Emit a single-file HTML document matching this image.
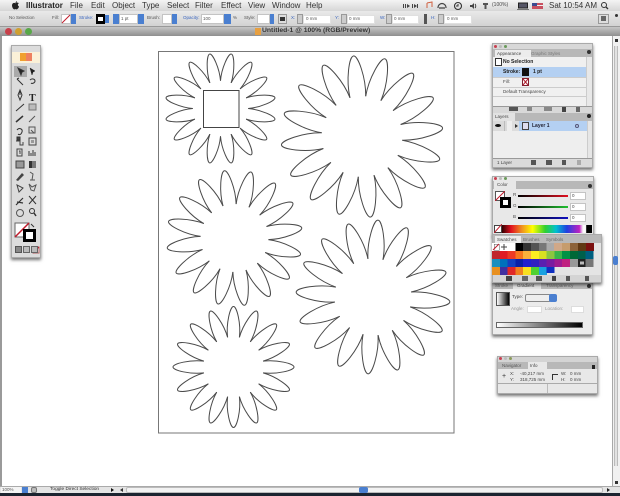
<!DOCTYPE html>
<html><head><meta charset="utf-8"><style>
html,body{margin:0;padding:0}
body{width:620px;height:496px;overflow:hidden;background:#fff;position:relative;font-family:"Liberation Sans",sans-serif;color:#222;filter:blur(.3px)}
div{position:absolute;box-sizing:border-box}
.t{position:absolute;white-space:nowrap;line-height:1}
.m{font-size:8px;top:1.5px;color:#333}
.s{font-size:4.5px;color:#555}
.i{background:#fff;border:1px solid #c4c4c4}
.blue{background:#4a7fd0}
.p{background:#ececec;box-shadow:0 2px 3px rgba(0,0,0,.55);border:1px solid #aaa}
.l{font-size:4.5px;color:#444}
.dots i{position:absolute;width:3px;height:3px;border-radius:50%}
</style></head><body>
<!-- menu bar -->
<div style="left:0;top:0;width:620px;height:11px;background:linear-gradient(#f4f4f4,#d6d6d6)"></div>
<svg style="position:absolute;left:11px;top:1px" width="9" height="9" viewBox="0 0 9 9"><path d="M4.5 2.2C3 1.3 1 2 1 4.4 1 6.4 2.4 8.6 3.4 8.4c.5 0 .7-.3 1.1-.3s.6.3 1.1.3c1 .2 2.4-2 2.4-3-1.6-.8-1.4-2.7-.1-3.2-.9-.9-2.3-.7-3.4 0zM4.500 2C4.500 1 5.200.3 6 .2c0 1-.6 1.700-1.500 1.800z" fill="#222"/></svg>
<span class="t m" style="left:26px;font-weight:bold;color:#222">Illustrator</span>
<span class="t m" style="left:70px">File</span>
<span class="t m" style="left:91px">Edit</span>
<span class="t m" style="left:112px">Object</span>
<span class="t m" style="left:142px">Type</span>
<span class="t m" style="left:167px">Select</span>
<span class="t m" style="left:195px">Filter</span>
<span class="t m" style="left:221px">Effect</span>
<span class="t m" style="left:248px">View</span>
<span class="t m" style="left:272px">Window</span>
<span class="t m" style="left:306px">Help</span>
<svg style="position:absolute;left:400px;top:1px" width="215" height="10" viewBox="0 0 215 10">
<path d="M3 3h1v4H3zM5 3h1v4H5zM7 3l3 2-3 2zM12 3h1v4h-1zM14 3l3 2-3 2zM17 3h1v4h-1z" fill="#444"/>
<path d="M27 2l5-1v5M27 2v5" stroke="#d06040" fill="none" stroke-width="1"/>
<path d="M38 7c0-6 8-6 8 0M39 7h6" stroke="#444" fill="none" stroke-width="1.200"/>
<circle cx="58" cy="5" r="3.500" stroke="#333" fill="none" stroke-width="1.100"/><path d="M58 3v2h-2" stroke="#333" fill="none"/>
<path d="M70 4h2l2-2v6l-2-2h-2z" fill="#444"/><path d="M75 3c1 1 1 3 0 4" stroke="#444" fill="none"/>
<path d="M83 2h5v2h-1.500v4h-2V4H83z" fill="#555"/>
<rect x="118" y="1.500" width="10" height="6" fill="#222"/><rect x="119" y="2.500" width="8" height="4" fill="#556"/><rect x="117" y="8" width="12" height="1" fill="#777"/>
<rect x="132" y="2" width="11" height="6" fill="#c85060"/><rect x="132" y="2" width="5" height="3" fill="#3a4a90"/><rect x="137" y="4" width="6" height="1" fill="#eee"/>
<circle cx="204" cy="4" r="2.500" stroke="#333" fill="none"/><path d="M206 6l2 2" stroke="#333" stroke-width="1.300"/>
</svg>
<span class="t" style="left:492px;top:3px;font-size:5px;color:#444">(100%)</span>
<span class="t m" style="left:549px;color:#333">Sat 10:54 AM</span>

<!-- control bar -->
<div style="left:0;top:11px;width:620px;height:16px;background:linear-gradient(#e9e9e9,#d2d2d2);border-bottom:1px solid #999"></div>
<span class="t s" style="left:9px;top:16px">No Selection</span>
<span class="t s" style="left:52px;top:16px">Fill:</span>
<div class="i" style="left:61px;top:14px;width:10px;height:10px"></div>
<svg style="position:absolute;left:61px;top:14px" width="10" height="10"><path d="M1 9L9 1" stroke="#c01c2c" stroke-width="1"/></svg>
<div class="blue" style="left:71px;top:14px;width:5px;height:10px"></div>
<span class="t s" style="left:79px;top:16px;color:#3a66c0">Stroke:</span>
<div style="left:96px;top:14px;width:9px;height:10px;background:#000"></div>
<div style="left:98px;top:17px;width:5px;height:4px;background:#fff"></div>
<div class="blue" style="left:105px;top:15px;width:4px;height:8px"></div>
<div class="blue" style="left:113px;top:14px;width:6px;height:10px"></div>
<div class="i" style="left:119px;top:14px;width:19px;height:10px"></div>
<span class="t s" style="left:121px;top:16.500px">1 pt</span>
<div class="blue" style="left:138px;top:14px;width:6px;height:10px"></div>
<span class="t s" style="left:147px;top:16px">Brush:</span>
<div class="i" style="left:162px;top:14px;width:10px;height:10px"></div>
<div class="blue" style="left:172px;top:14px;width:5px;height:10px"></div>
<span class="t s" style="left:183px;top:16px;color:#3a66c0">Opacity:</span>
<div class="i" style="left:201px;top:14px;width:23px;height:10px"></div>
<span class="t s" style="left:203px;top:16.500px">100</span>
<div class="blue" style="left:224px;top:14px;width:7px;height:10px"></div>
<span class="t s" style="left:233px;top:16px">%</span>
<span class="t s" style="left:244px;top:16px">Style:</span>
<div class="i" style="left:257px;top:14px;width:13px;height:10px"></div>
<div class="blue" style="left:270px;top:14px;width:4px;height:10px"></div>
<div style="left:278px;top:14px;width:9px;height:10px;background:#ddd;border:1px solid #999"></div>
<div style="left:280px;top:17px;width:5px;height:4px;background:#333"></div>
<span class="t s" style="left:291px;top:16px;color:#3a66c0">X:</span>
<div style="left:297px;top:14px;width:6px;height:10px;background:#ccc;border:1px solid #999"></div>
<div class="i" style="left:303px;top:15px;width:28px;height:9px;border-color:#e0e0e0"></div>
<span class="t s" style="left:306px;top:16.500px">0 mm</span>
<span class="t s" style="left:335px;top:16px;color:#3a66c0">Y:</span>
<div style="left:341px;top:14px;width:6px;height:10px;background:#ccc;border:1px solid #999"></div>
<div class="i" style="left:347px;top:15px;width:28px;height:9px;border-color:#e0e0e0"></div>
<span class="t s" style="left:349px;top:16.500px">0 mm</span>
<span class="t s" style="left:380px;top:16px;color:#3a66c0">W:</span>
<div style="left:386px;top:14px;width:6px;height:10px;background:#ccc;border:1px solid #999"></div>
<div class="i" style="left:392px;top:15px;width:27px;height:9px;border-color:#e0e0e0"></div>
<span class="t s" style="left:394px;top:16.500px">0 mm</span>
<div style="left:424px;top:14px;width:3px;height:10px;background:#555"></div>
<span class="t s" style="left:431px;top:16px;color:#3a66c0">H:</span>
<div style="left:438px;top:14px;width:6px;height:10px;background:#ccc;border:1px solid #999"></div>
<div class="i" style="left:444px;top:15px;width:28px;height:9px;border-color:#e0e0e0"></div>
<span class="t s" style="left:447px;top:16.500px">0 mm</span>
<div style="left:598px;top:14px;width:11px;height:10px;background:#ddd;border:1px solid #999"></div>
<div style="left:601px;top:16px;width:5px;height:5px;background:#666"></div>
<div style="left:615px;top:14px;width:3px;height:3px;background:#333;border-radius:50%"></div>

<!-- title bar -->
<div style="left:0;top:27px;width:620px;height:9px;background:linear-gradient(#c6c6c6,#8f8f8f)"></div>
<div style="left:5px;top:28px;width:7px;height:7px;border-radius:50%;background:#c8404a"></div>
<div style="left:15px;top:28px;width:7px;height:7px;border-radius:50%;background:#d0a030"></div>
<div style="left:25px;top:28px;width:7px;height:7px;border-radius:50%;background:#58a848"></div>
<div style="left:255px;top:28px;width:6px;height:7px;background:#e8a040"></div>
<span class="t" style="left:262px;top:28px;font-size:6.800px;font-weight:bold;color:#333">Untitled-1 @ 100% (RGB/Preview)</span>

<!-- window edges -->
<div style="left:0;top:36px;width:2px;height:451px;background:#9a9a9a"></div>
<!-- vertical scrollbar -->
<div style="left:612px;top:36px;width:8px;height:451px;background:#f1f1f1;border-left:1px solid #a8a8a8"></div>
<div style="left:614px;top:46px;width:4px;height:420px;background:#e2e2e2;border-left:1px solid #bbb;border-right:1px solid #bbb"></div>
<div class="blue" style="left:613px;top:256px;width:5px;height:9px;border-radius:2px"></div>
<div style="left:615px;top:39px;width:3px;height:3px;background:#333"></div>
<div style="left:615px;top:481px;width:3px;height:3px;background:#333"></div>

<!-- artwork -->
<svg style="position:absolute;left:0;top:0" width="620" height="496" viewBox="0 0 620 496">
<defs>
<path id="pt" d="M-9.750-49C-12.500-72-5.500-100 0-100 5.500-100 12.500-72 9.750-49" fill="none" stroke="#4a4a4a" stroke-width="1" vector-effect="non-scaling-stroke"/>
<g id="ring">
<use href="#pt"/><use href="#pt" transform="rotate(22.500)"/><use href="#pt" transform="rotate(45)"/><use href="#pt" transform="rotate(67.500)"/>
<use href="#pt" transform="rotate(90)"/><use href="#pt" transform="rotate(112.500)"/><use href="#pt" transform="rotate(135)"/><use href="#pt" transform="rotate(157.500)"/>
<use href="#pt" transform="rotate(180)"/><use href="#pt" transform="rotate(202.500)"/><use href="#pt" transform="rotate(225)"/><use href="#pt" transform="rotate(247.500)"/>
<use href="#pt" transform="rotate(270)"/><use href="#pt" transform="rotate(292.500)"/><use href="#pt" transform="rotate(315)"/><use href="#pt" transform="rotate(337.500)"/>
</g></defs>
<rect x="158.500" y="51.500" width="295.500" height="381.500" fill="#fff" stroke="#777" stroke-width="1"/>
<use href="#ring" transform="translate(220.500 108.500) rotate(11.250) scale(.555)"/>
<rect x="203.500" y="90.500" width="35.500" height="37" fill="#fff" stroke="#444" stroke-width="1"/>
<use href="#ring" transform="translate(362 136.500) rotate(-6) scale(.81)"/>
<use href="#ring" transform="translate(234.500 238) rotate(-8.500) scale(.68)"/>
<use href="#ring" transform="translate(373 297) rotate(3.700) scale(.77)"/>
<use href="#ring" transform="translate(233.500 367) scale(.605)"/>
</svg>

<!-- toolbox -->
<div class="p" style="left:11px;top:45px;width:30px;height:213px;background:#dcdcdc"></div>
<div style="left:12px;top:52px;width:28px;height:11px;background:#fbf1d8"></div>
<div style="left:20px;top:53px;width:6px;height:8px;background:#f0a030"></div>
<div style="left:26px;top:53px;width:6px;height:8px;background:#ee8060"></div>
<div style="left:14px;top:66px;width:13px;height:11px;background:#aaa"></div>
<svg style="position:absolute;left:12px;top:64px" width="28" height="194" viewBox="0 0 28 194" fill="none" stroke="#333" stroke-width="1">
<path d="M6 4l3 7 1-3 2-1z" fill="#222"/><path d="M18 4l2 7 1-3 2-1z" fill="#222" stroke="#222" stroke-width=".5"/>
<path d="M5 15l6 6M5 15l2-1" /><path d="M18 16c2-2 5-1 5 1s-3 3-4 2"/>
<path d="M8 26l-2 5 2 5 2-5zM8 26v5"/><text x="17" y="37" font-family="Liberation Serif,serif" font-size="10" font-weight="bold" fill="#222" stroke="none">T</text>
<path d="M4 47l8-7"/><rect x="17" y="40" width="7" height="6" fill="#bbb" stroke="#777"/>
<path d="M4 58l7-6" stroke-width="1.500"/><path d="M17 58l6-6" stroke="#555"/>
<path d="M5 66c2-3 6-1 5 2s-3 3-4 2"/><path d="M17 63h6v6h-6zM19 66l3 3" stroke="#555"/>
<path d="M4 77h4v4h3v-3" stroke="#444"/><rect x="5" y="73" width="3" height="3" fill="#444"/><rect x="17" y="74" width="7" height="7" stroke="#444"/><rect x="19" y="76" width="3" height="3" fill="#999" stroke="none"/>
<path d="M5 85h5v7H5zM7 87h1v3" stroke="#444"/><path d="M17 92v-5M19 92v-3M21 92v-6M23 92v-4" stroke="#333"/>
<rect x="4" y="97" width="8" height="7" fill="#999" stroke="#444"/><rect x="17" y="97" width="7" height="7" fill="#333" stroke="none"/><rect x="20" y="97" width="4" height="7" fill="#777" stroke="none"/>
<path d="M4 116l6-7 2 2-6 6z" fill="#444" stroke="none"/><path d="M18 108l3 2-1 6M18 116h5" stroke="#555"/>
<path d="M5 121l6 3-4 4z" stroke="#444"/><path d="M17 120l3 3 4-2-2 6-3-1z" stroke="#555"/>
<path d="M4 141l7-7M5 138l6 1" stroke-width="1.200"/><path d="M17 132l7 8M24 132l-7 8" stroke-width="1"/>
<circle cx="8" cy="149" r="3.500" stroke="#555"/><circle cx="20" cy="147" r="2.500"/><path d="M22 149l2 3" stroke-width="1.500"/>
<rect x="3" y="159" width="14" height="14" fill="#fff" stroke="#666"/><path d="M3 173L17 159" stroke="#c01c2c" stroke-width="1.500"/>
<rect x="11" y="165" width="13" height="13" fill="#000" stroke="none"/><rect x="14" y="168" width="7" height="7" fill="#fff" stroke="none"/>
<path d="M19 160l3 3"/>
<rect x="4" y="183" width="6" height="6" fill="#111" stroke="none"/><rect x="13" y="183" width="4" height="6" fill="#777" stroke="none"/><rect x="21" y="183" width="6" height="6" fill="#fff" stroke="#b06060"/><path d="M21 189l6-6" stroke="#c01c2c"/>
</svg>
<div style="left:15px;top:246px;width:7px;height:7px;background:#888;border:1px solid #555"></div>
<div style="left:23px;top:246px;width:7px;height:7px;background:#bbb;border:1px solid #666"></div>
<div style="left:31px;top:246px;width:7px;height:7px;background:#bbb;border:1px solid #666"></div>

<!-- Appearance / Layers -->
<div class="p" style="left:492px;top:43px;width:101px;height:125px;background:#e6e6e6"></div>
<div style="left:493px;top:44px;width:99px;height:7px;background:#d8d8d8"></div>
<div class="dots" style="left:494px;top:44.500px;width:20px;height:4px"><i style="left:0;background:#c84050"></i><i style="left:5px;background:#bbb"></i><i style="left:10px;background:#6a9a5a"></i></div>
<div style="left:493px;top:49px;width:99px;height:8px;background:#b8b8b8"></div>
<div style="left:495px;top:50px;width:36px;height:7px;background:#ececec"></div>
<span class="t l" style="left:497px;top:51.500px">Appearance</span>
<span class="t l" style="left:531px;top:51.500px;color:#777">Graphic Styles</span>
<div style="left:587px;top:50px;width:4px;height:4px;background:#333;border-radius:50%"></div>
<div style="left:493px;top:57px;width:99px;height:49px;background:#f0f0f0"></div>
<div style="left:495px;top:58px;width:7px;height:8px;background:#fff;border:1px solid #333"></div>
<span class="t" style="left:503px;top:59.500px;font-size:5px;font-weight:bold;color:#222">No Selection</span>
<div style="left:493px;top:67px;width:93px;height:10px;background:#b4d0f2"></div>
<span class="t" style="left:503px;top:69.500px;font-size:5px;font-weight:bold;color:#222">Stroke:</span>
<div style="left:522px;top:68px;width:7px;height:8px;background:#111"></div>
<span class="t" style="left:533px;top:69.500px;font-size:5px;font-weight:bold;color:#222">1 pt</span>
<div style="left:493px;top:77px;width:93px;height:1px;background:#ccc"></div>
<span class="t l" style="left:503px;top:80px">Fill:</span>
<div style="left:522px;top:78px;width:7px;height:8px;background:#fff;border:1px solid #802030"></div>
<svg style="position:absolute;left:522px;top:78px" width="7" height="8"><path d="M1 7L6 1M1 1l5 6" stroke="#b02030"/></svg>
<div style="left:493px;top:87px;width:93px;height:1px;background:#ccc"></div>
<span class="t l" style="left:503px;top:89.500px">Default Transparency</span>
<div style="left:493px;top:96px;width:93px;height:1px;background:#ccc"></div>
<div style="left:586px;top:57px;width:6px;height:49px;background:#e8e8e8;border-left:1px solid #ccc"></div>
<div style="left:493px;top:106px;width:99px;height:7px;background:#d8d8d8;border-top:1px solid #999"></div>
<div style="left:509px;top:107px;width:9px;height:4px;background:#555"></div>
<div style="left:527px;top:107px;width:5px;height:4px;background:#888"></div>
<div style="left:544px;top:107px;width:8px;height:4px;background:#888"></div>
<div style="left:562px;top:107px;width:4px;height:5px;background:#444"></div>
<div style="left:576px;top:107px;width:4px;height:5px;background:#666"></div>
<!-- Layers -->
<div style="left:493px;top:113px;width:99px;height:8px;background:#b8b8b8"></div>
<div style="left:493px;top:113px;width:22px;height:8px;background:#e2e2e2"></div>
<span class="t l" style="left:495px;top:114.500px">Layers</span>
<div style="left:587px;top:114px;width:4px;height:4px;background:#222;border-radius:50%"></div>
<div style="left:493px;top:121px;width:99px;height:38px;background:#eeeeee"></div>
<div style="left:493px;top:121px;width:14px;height:10px;background:#dadada"></div>
<div style="left:495px;top:124px;width:6px;height:3px;background:#111;border-radius:50%"></div>
<div style="left:504px;top:121px;width:1px;height:10px;background:#bbb"></div>
<div style="left:512px;top:121px;width:7px;height:10px;background:#ddd"></div>
<div style="left:515px;top:124px;width:0;height:0;border-left:3px solid #333;border-top:2px solid transparent;border-bottom:2px solid transparent"></div>
<div style="left:519px;top:121px;width:68px;height:10px;background:#b4d0f2"></div>
<div style="left:522px;top:122px;width:7px;height:8px;background:#dde;border:1px solid #444"></div>
<span class="t" style="left:532px;top:123.500px;font-size:5px;font-weight:bold;color:#223">Layer 1</span>
<div style="left:575px;top:124px;width:4px;height:4px;border-radius:50%;border:1px solid #557"></div>
<div style="left:587px;top:121px;width:5px;height:38px;background:#e6e6e6;border-left:1px solid #ccc"></div>
<div style="left:493px;top:158px;width:99px;height:9px;background:#dadada;border-top:1px solid #999"></div>
<span class="t l" style="left:497px;top:161px">1 Layer</span>
<div style="left:531px;top:160px;width:5px;height:5px;background:#555"></div>
<div style="left:546px;top:160px;width:6px;height:5px;background:#555"></div>
<div style="left:562px;top:160px;width:4px;height:5px;background:#555"></div>
<div style="left:577px;top:160px;width:4px;height:5px;background:#aaa"></div>

<!-- Color -->
<div class="p" style="left:492px;top:176px;width:102px;height:60px;background:#e8e8e8"></div>
<div class="dots" style="left:494px;top:176.500px;width:20px;height:4px"><i style="left:0;background:#c84050"></i><i style="left:5px;background:#bbb"></i><i style="left:10px;background:#6a9a5a"></i></div>
<div style="left:493px;top:180.500px;width:100px;height:8px;background:#b8b8b8"></div>
<div style="left:494px;top:181px;width:22px;height:8px;background:#e8e8e8"></div>
<span class="t l" style="left:497px;top:182.500px">Color</span>
<div style="left:588px;top:184px;width:4px;height:4px;background:#333;border-radius:50%"></div>
<div style="left:495px;top:191px;width:10px;height:10px;background:#fff;border:1px solid #555"></div>
<svg style="position:absolute;left:495px;top:191px" width="10" height="10"><path d="M0 10L10 0" stroke="#c01c2c"/></svg>
<div style="left:500px;top:197px;width:11px;height:11px;background:#000"></div>
<div style="left:503px;top:200px;width:5px;height:5px;background:#fff"></div>
<span class="t l" style="left:513px;top:193px">R</span>
<span class="t l" style="left:513px;top:204px">G</span>
<span class="t l" style="left:513px;top:215px">B</span>
<div style="left:518px;top:194.500px;width:50px;height:2.500px;background:linear-gradient(90deg,#000,#e01020)"></div>
<div style="left:518px;top:205.500px;width:50px;height:2.500px;background:linear-gradient(90deg,#000,#20c030)"></div>
<div style="left:518px;top:216.500px;width:50px;height:2.500px;background:linear-gradient(90deg,#000,#1010c0)"></div>
<div class="i" style="left:570px;top:192px;width:16px;height:8px"></div>
<div class="i" style="left:570px;top:203px;width:16px;height:8px"></div>
<div class="i" style="left:570px;top:214px;width:16px;height:8px"></div>
<span class="t l" style="left:572px;top:194px">0</span><span class="t l" style="left:572px;top:205px">0</span><span class="t l" style="left:572px;top:216px">0</span>
<div style="left:494px;top:224.500px;width:8px;height:8px;background:#fff;border:1px solid #444"></div>
<svg style="position:absolute;left:494px;top:224px" width="8" height="9"><path d="M0 9L8 0" stroke="#c01c2c"/></svg>
<div style="left:502px;top:224.500px;width:90px;height:8px;background:linear-gradient(90deg,#300,#e01020 10%,#f09020 22%,#ff0 34%,#30d030 48%,#00c0d0 60%,#2040e0 72%,#c020c0 86%,#f8f8f8 90%,#fff 93%,#000 94%)"></div>

<!-- Swatches -->
<div class="p" style="left:492px;top:234px;width:110px;height:49px;background:#e4e4e4;z-index:2"></div>
<div style="left:493px;top:235px;width:108px;height:8px;background:#b8b8b8;z-index:2"></div>
<div style="left:495px;top:236px;width:26px;height:7px;background:#ececec;z-index:2"></div>
<span class="t l" style="left:497px;top:237.500px;z-index:2">Swatches</span>
<span class="t l" style="left:523px;top:237.500px;color:#666;z-index:2">Brushes</span>
<span class="t l" style="left:546px;top:237.500px;color:#666;z-index:2">Symbols</span>
<svg style="position:absolute;left:492px;top:243px;z-index:3" width="110" height="32" viewBox="0 0 110 32" shape-rendering="crispEdges">
<rect x="0" y="0" width="102" height="8" fill="#fff"/>
<g><rect x="23.400" width="8" height="8" fill="#000"/><rect x="31" width="8" height="8" fill="#333"/><rect x="39" width="8" height="8" fill="#555"/><rect x="47" width="8" height="8" fill="#777"/><rect x="54.500" width="8" height="8" fill="#aaa"/><rect x="62" width="8" height="8" fill="#d0a888"/><rect x="70" width="8" height="8" fill="#c69c6d"/><rect x="78" width="8" height="8" fill="#8c6239"/><rect x="86" width="8" height="8" fill="#603813"/><rect x="94" width="8" height="8" fill="#7b1010"/></g>
<g transform="translate(0 8)"><rect x="0" width="8" height="8" fill="#c1272d"/><rect x="7.800" width="8" height="8" fill="#e01c24"/><rect x="15.600" width="8" height="8" fill="#ed3a24"/><rect x="23.400" width="8" height="8" fill="#f7761e"/><rect x="31.200" width="8" height="8" fill="#fbb03b"/><rect x="39" width="8" height="8" fill="#fcee21"/><rect x="46.800" width="8" height="8" fill="#d9e021"/><rect x="54.600" width="8" height="8" fill="#8cc63f"/><rect x="62.400" width="8" height="8" fill="#39b54a"/><rect x="70.200" width="8" height="8" fill="#009245"/><rect x="78" width="8" height="8" fill="#006837"/><rect x="85.800" width="8" height="8" fill="#00604a"/><rect x="93.600" width="8" height="8" fill="#005f80"/></g>
<g transform="translate(0 16)"><rect x="0" width="8" height="8" fill="#1a8fc0"/><rect x="7.800" width="8" height="8" fill="#0071bc"/><rect x="15.600" width="8" height="8" fill="#1440c0"/><rect x="23.400" width="8" height="8" fill="#0a20a8"/><rect x="31.200" width="8" height="8" fill="#2020d0"/><rect x="39" width="8" height="8" fill="#3020c0"/><rect x="46.800" width="8" height="8" fill="#5a20b0"/><rect x="54.600" width="8" height="8" fill="#7a1aa0"/><rect x="62.400" width="8" height="8" fill="#a01a90"/><rect x="70.200" width="8" height="8" fill="#c02080"/><rect x="78" width="8" height="8" fill="#999"/><rect x="85.800" width="8" height="8" fill="#222"/><rect x="87.800" y="2.500" width="4" height="3" fill="#bbb"/><rect x="93.600" width="8" height="8" fill="#777"/></g>
<g transform="translate(0 24)"><rect x="0" width="8" height="8" fill="#e89020"/><rect x="7.800" width="8" height="8" fill="#4030a0"/><rect x="15.600" width="8" height="8" fill="#e02828"/><rect x="23.400" width="8" height="8" fill="#f08020"/><rect x="31.200" width="8" height="8" fill="#f8e020"/><rect x="39" width="8" height="8" fill="#50d030"/><rect x="46.800" width="8" height="8" fill="#18a0e0"/><rect x="54.600" width="8" height="6" fill="#1030c0"/></g>
<rect x="2" y="1" width="5" height="6" fill="#fff" stroke="#555" stroke-width=".5"/><path d="M1 7L7 1" stroke="#c01c2c" shape-rendering="auto"/>
<path d="M12 1v6M9 4h6" stroke="#444" shape-rendering="auto"/>
</svg>
<div style="left:493px;top:275px;width:108px;height:7px;background:#d4d4d4;z-index:2"></div>
<div style="left:506px;top:276px;width:6px;height:5px;background:#444;z-index:3"></div>
<div style="left:522px;top:276px;width:6px;height:5px;background:#666;z-index:3"></div>
<div style="left:536px;top:276px;width:6px;height:5px;background:#555;z-index:3"></div>
<div style="left:552px;top:276px;width:4px;height:5px;background:#444;z-index:3"></div>
<div style="left:566px;top:276px;width:4px;height:5px;background:#555;z-index:3"></div>
<div style="left:585px;top:276px;width:4px;height:5px;background:#555;z-index:3"></div>

<!-- Gradient -->
<div class="p" style="left:492px;top:281px;width:101px;height:54px;background:#ececec"></div>
<div style="left:493px;top:282px;width:99px;height:7px;background:#b8b8b8"></div>
<div style="left:513px;top:283px;width:28px;height:6px;background:#e4e4e4"></div>
<span class="t l" style="left:495px;top:283.500px;color:#666">Stroke</span>
<span class="t l" style="left:517px;top:283.500px">Gradient</span>
<span class="t l" style="left:546px;top:283.500px;color:#666">Transparency</span>
<div style="left:587px;top:284px;width:4px;height:4px;background:#333;border-radius:50%"></div>
<div style="left:496px;top:292px;width:14px;height:14px;background:linear-gradient(90deg,#fff,#000);border:1px solid #555"></div>
<span class="t l" style="left:512px;top:295px">Type:</span>
<div style="left:525px;top:294px;width:26px;height:8px;background:#eee;border:1px solid #888;border-radius:2px"></div>
<div class="blue" style="left:549px;top:294px;width:8px;height:8px;border-radius:2px"></div>
<span class="t l" style="left:511px;top:307px;color:#999">Angle:</span>
<div class="i" style="left:527px;top:306px;width:15px;height:7px;border-color:#ddd"></div>
<span class="t l" style="left:545px;top:307px;color:#999">Location:</span>
<div class="i" style="left:571px;top:306px;width:13px;height:7px;border-color:#ddd"></div>
<div style="left:496px;top:322px;width:87px;height:6px;background:linear-gradient(90deg,#fff,#000);border:1px solid #666"></div>

<!-- Info -->
<div class="p" style="left:497px;top:356px;width:101px;height:38px;background:#e8e8e8"></div>
<div style="left:498px;top:357px;width:99px;height:6px;background:#d4d4d4"></div>
<div class="dots" style="left:499px;top:357px;width:20px;height:4px"><i style="left:0;background:#c84050"></i><i style="left:5px;background:#bbb"></i><i style="left:10px;background:#8a9a5a"></i></div>
<div style="left:498px;top:362px;width:99px;height:7px;background:#b8b8b8"></div>
<div style="left:528px;top:362px;width:19px;height:7px;background:#e8e8e8"></div>
<span class="t l" style="left:502px;top:364px;color:#555">Navigator</span>
<span class="t l" style="left:530px;top:364px">Info</span>
<div style="left:592px;top:365px;width:3px;height:4px;background:#222"></div>
<span class="t" style="left:502px;top:373px;font-size:7px;color:#333">+</span>
<span class="t l" style="left:510px;top:372px">X:</span>
<span class="t l" style="left:510px;top:378px">Y:</span>
<span class="t l" style="left:520px;top:372px">-40,217 mm</span>
<span class="t l" style="left:520px;top:378px">318,725 mm</span>
<div style="left:552px;top:374px;width:6px;height:6px;border-left:1px solid #333;border-top:1px solid #333"></div>
<span class="t l" style="left:561px;top:372px">W:</span>
<span class="t l" style="left:561px;top:378px">H:</span>
<span class="t l" style="left:570px;top:372px">0 mm</span>
<span class="t l" style="left:570px;top:378px">0 mm</span>
<div style="left:498px;top:383px;width:99px;height:1px;background:#aaa"></div>
<div style="left:547px;top:384px;width:1px;height:9px;background:#bbb"></div>

<!-- status bar -->
<div style="left:0;top:486px;width:620px;height:7px;background:#e4e4e4;border-top:1px solid #aaa"></div>
<div style="left:1px;top:487px;width:20px;height:6px;background:#f4f4f4"></div>
<span class="t" style="left:2px;top:488px;font-size:4.500px;color:#555">100%</span>
<div class="blue" style="left:22px;top:487px;width:6px;height:6px"></div>
<div style="left:31px;top:487px;width:6px;height:6px;background:#bbb;border:1px solid #777;border-radius:2px"></div>
<span class="t" style="left:50px;top:488px;font-size:4.800px;color:#333">Toggle Direct Selection</span>
<div style="left:111px;top:488px;width:0;height:0;border-left:3px solid #111;border-top:2px solid transparent;border-bottom:2px solid transparent"></div>
<div style="left:120px;top:488px;width:0;height:0;border-right:3px solid #333;border-top:2px solid transparent;border-bottom:2px solid transparent"></div>
<div style="left:126px;top:487px;width:477px;height:6px;background:#f2f2f2;border:1px solid #bbb;border-radius:2px"></div>
<div class="blue" style="left:359px;top:487px;width:9px;height:6px;border-radius:2px"></div>
<div style="left:607px;top:488px;width:0;height:0;border-left:3px solid #222;border-top:2px solid transparent;border-bottom:2px solid transparent"></div>
<div style="left:0;top:493px;width:620px;height:3px;background:#1c2430"></div>
</body></html>
